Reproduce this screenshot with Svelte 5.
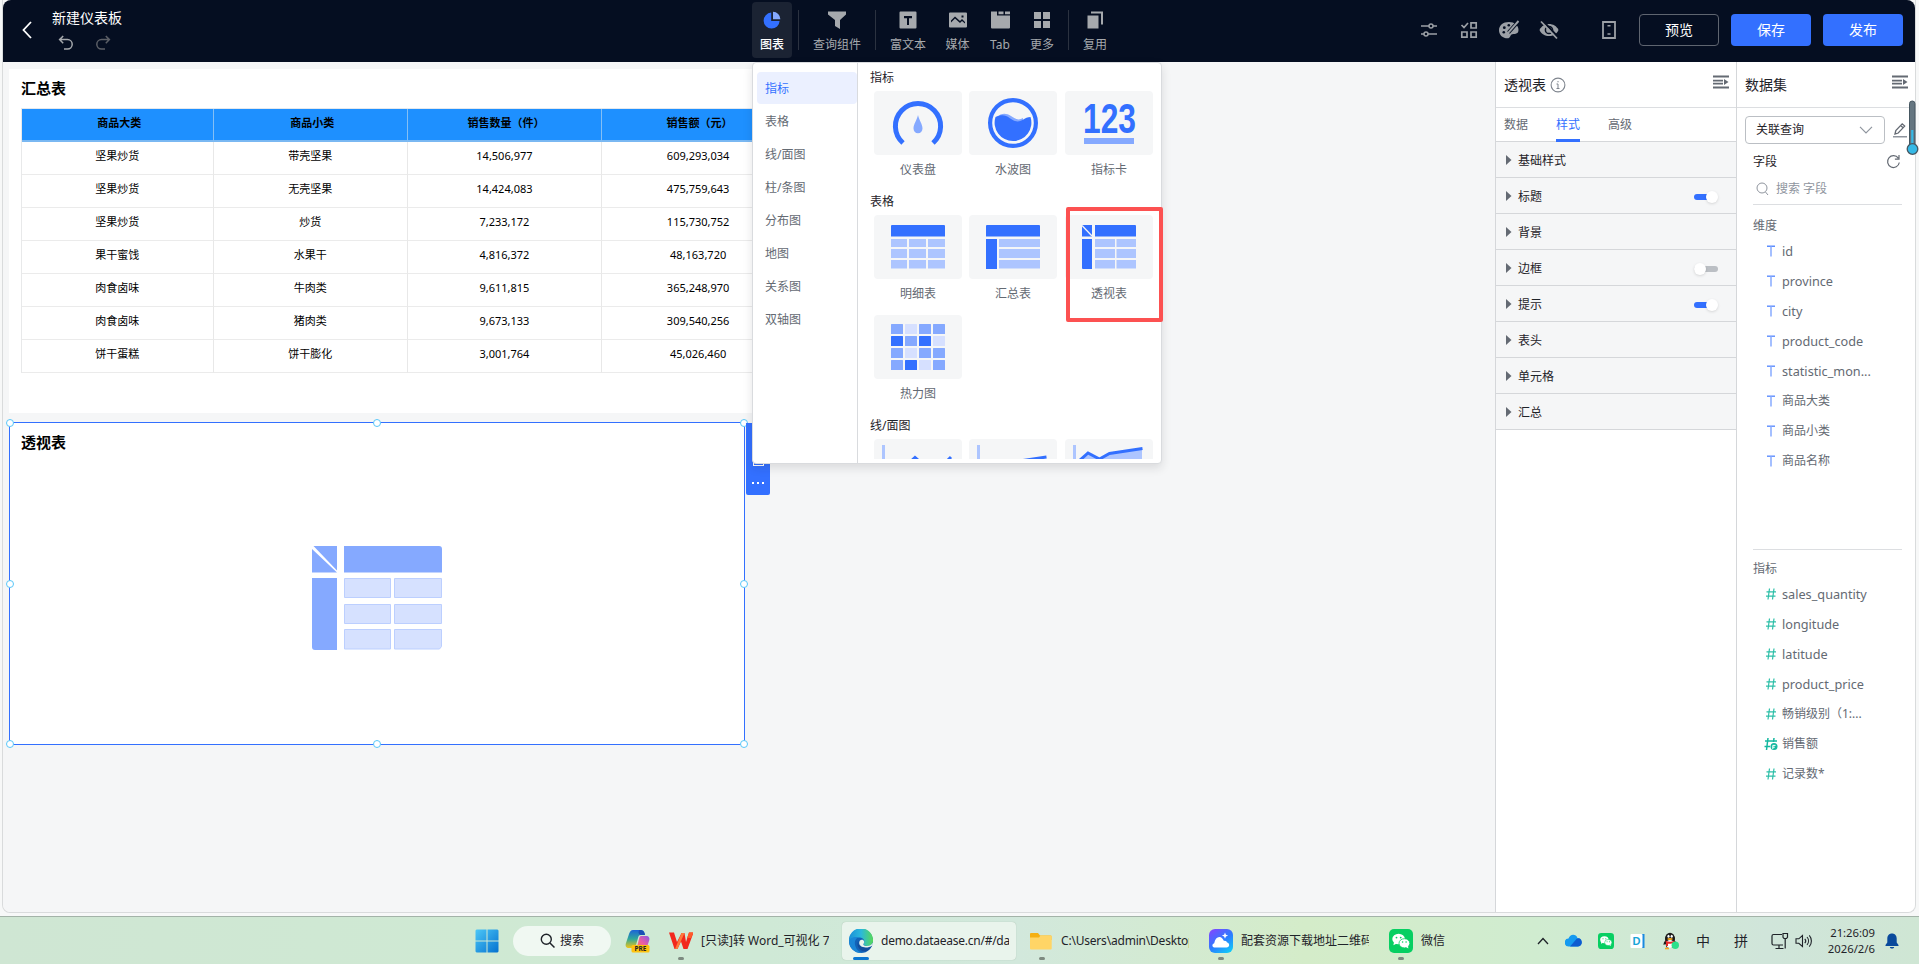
<script>
  const rows = [
    ['坚果炒货', '带壳坚果', '14,506,977', '609,293,034'],
    ['坚果炒货', '无壳坚果', '14,424,083', '475,759,643'],
    ['坚果炒货', '炒货', '7,233,172', '115,730,752'],
    ['果干蜜饯', '水果干', '4,816,372', '48,163,720'],
    ['肉食卤味', '牛肉类', '9,611,815', '365,248,970'],
    ['肉食卤味', '猪肉类', '9,673,133', '309,540,256'],
    ['饼干蛋糕', '饼干膨化', '3,001,764', '45,026,460']
  ];
  const heads = ['商品大类', '商品小类', '销售数量（件）', '销售额（元）'];
  const cats = ['指标', '表格', '线/面图', '柱/条图', '分布图', '地图', '关系图', '双轴图'];
  const sections = [
    ['基础样式', null], ['标题', true], ['背景', null], ['边框', false],
    ['提示', true], ['表头', null], ['单元格', null], ['汇总', null]
  ];
  const dims = ['id', 'province', 'city', 'product_code', 'statistic_mon...', '商品大类', '商品小类', '商品名称'];
  const metrics = ['sales_quantity', 'longitude', 'latitude', 'product_price', '畅销级别（1:...', '销售额', '记录数*'];
  const heat = [1, 0, 1, 1, 2, 1, 2, 0, 1, 0, 1, 1, 1, 2, 0, 1];
  const heatColors = ['#d6e0ff', '#85a9ff', '#3370ff'];
  const handles = [[0, 0], [50, 0], [100, 0], [0, 50], [100, 50], [0, 100], [50, 100], [100, 100]];
  const latin = (s) => /^[a-z]/.test(s);
</script>

{#snippet fold()}
  <svg class="fold" width="16" height="14" viewBox="0 0 16 14"><path d="M0 1.500h16M0 5.600h10M0 8.600h10M0 12.500h16" stroke="#646a73" stroke-width="1.900" /><path d="M11 4l4.500 3.100L11 10z" fill="#646a73" /></svg>
{/snippet}

{#snippet wechat(size)}
  <svg width={size} height={size} viewBox="0 0 24 24">
    <rect width="24" height="24" rx="5" fill="#07cf62" />
    <ellipse cx="9.600" cy="10" rx="6.300" ry="5.300" fill="#fff" /><path d="M5 13l-.6 3.300 3.400-1.700z" fill="#fff" />
    <ellipse cx="15.400" cy="14.300" rx="5.400" ry="4.600" fill="#fff" stroke="#07cf62" stroke-width=".8" /><path d="M17 18l2.400 1.400-.5-2.600z" fill="#fff" />
    <g fill="#07cf62"><circle cx="7.500" cy="8.600" r=".9" /><circle cx="11.700" cy="8.600" r=".9" /><circle cx="13.600" cy="13" r=".8" /><circle cx="17.100" cy="13" r=".8" /></g>
  </svg>
{/snippet}

<div class="screen">
  <div class="window">
    <header>
      <div class="left">
        <svg class="back" width="10" height="18" viewBox="0 0 10 18"><path d="M9 1L1.500 9 9 17" fill="none" stroke="#fff" stroke-width="1.800" /></svg>
        <div class="titles">
          <div class="doc">新建仪表板</div>
          <div class="history">
            <svg width="16" height="16" viewBox="0 0 16 16" fill="none" stroke="#a6a9ad" stroke-width="1.500"><path d="M5.200 1L1.600 4.600l3.600 3.600M2 4.600h7.500a4.700 4.700 0 0 1 0 9.400H6" /></svg>
            <svg width="16" height="16" viewBox="0 0 16 16" fill="none" stroke="#5c5f66" stroke-width="1.500"><path d="M10.800 1l3.600 3.600-3.600 3.600M14 4.600H6.500a4.700 4.700 0 0 0 0 9.400H10" /></svg>
          </div>
        </div>
      </div>
      <nav>
        <div class="tool on" style:width="40px">
          <svg width="18" height="18" viewBox="0 0 18 18"><path d="M8.200 1.600A8 8 0 1 0 16.600 10H8.200z" fill="#3370ff" /><path d="M10 .8a7.600 7.600 0 0 1 7.400 7.400H10z" fill="#85a9ff" /></svg>
          <span>图表</span>
        </div>
        <i></i>
        <div class="tool" style:width="64px">
          <svg width="18" height="18" viewBox="0 0 18 18"><path d="M0 .5h18v3L12 9v9l-5-3V9L0 3.500z" fill="#a6a9ad" /></svg>
          <span>查询组件</span>
        </div>
        <i></i>
        <div class="tool" style:width="52px">
          <svg width="18" height="18" viewBox="0 0 18 18"><path fill-rule="evenodd" d="M1.500.5h15a1 1 0 0 1 1 1v15a1 1 0 0 1-1 1h-15a1 1 0 0 1-1-1v-15a1 1 0 0 1 1-1zM5 5v2.200h3V14h2V7.200h3V5z" fill="#a6a9ad" /></svg>
          <span>富文本</span>
        </div>
        <div class="tool" style:width="41px">
          <svg width="18" height="18" viewBox="0 0 18 18"><path fill-rule="evenodd" d="M1 1.500h16a1 1 0 0 1 1 1v13a1 1 0 0 1-1 1H1a1 1 0 0 1-1-1v-13a1 1 0 0 1 1-1zM2 11.500l4-4 5 4.500 2-2 3 2.500V11l-3-3-2 2-5-4.500-4 4zM12.500 4.500v2h2v-2z" fill="#a6a9ad" /></svg>
          <span>媒体</span>
        </div>
        <div class="tool" style:width="38px">
          <svg width="19" height="18" viewBox="0 0 19 18"><path d="M0 .5h6v4h13V16.500a1 1 0 0 1-1 1H1a1 1 0 0 1-1-1zM7.500.5h5v2.700h-5zM14 .5h5v2.700h-5z" fill="#a6a9ad" /></svg>
          <span>Tab</span>
        </div>
        <div class="tool" style:width="40px">
          <svg width="18" height="18" viewBox="0 0 18 18"><path d="M1 1h7v7H1zM10 1h7v7h-7zM1 10h7v7H1zM10 10h7v7h-7z" fill="#a6a9ad" /></svg>
          <span>更多</span>
        </div>
        <i></i>
        <div class="tool" style:width="40px">
          <svg width="18" height="18" viewBox="0 0 18 18"><path d="M1.500 4.500h11v13h-11z" fill="#a6a9ad" /><path d="M5 1.500h11v12" fill="none" stroke="#a6a9ad" stroke-width="2" /></svg>
          <span>复用</span>
        </div>
      </nav>
      <div class="right">
        <svg width="24" height="24" viewBox="0 0 24 24" fill="none" stroke="#9ca0a6" stroke-width="1.500"><path d="M4 8h8M16 8h4M4 16h3M11 16h9" /><circle cx="14" cy="8" r="2" /><circle cx="9" cy="16" r="2" /></svg>
        <svg width="24" height="24" viewBox="0 0 24 24" fill="none" stroke="#9ca0a6" stroke-width="1.700"><path d="M4.500 7l2.500 2.500 4-4.500M14 4.800h5.200V10H14zM4.800 14H10v5.200H4.800zM14 14h5.200v5.200H14z" /></svg>
        <svg width="24" height="24" viewBox="0 0 24 24"><path d="M12 4C6 4 2 7.500 2 12.200 2 17.200 6 20.300 10.500 20.300c3 0 2.500-3 4-3.800 2-1 7 .5 7-4.500C21.500 7.500 17.500 4 12 4z" fill="#9ca0a6" /><g fill="#050e21"><circle cx="7.300" cy="9.700" r="1.400" /><circle cx="11.800" cy="7.300" r="1.300" /><circle cx="6.800" cy="14.300" r="1.300" /></g><path d="M11.500 14.500L21.500 3.300" stroke="#050e21" stroke-width="3.600" /><path d="M10.700 15.300L21.500 3" stroke="#9ca0a6" stroke-width="1.900" /></svg>
        <svg width="24" height="24" viewBox="0 0 24 24"><path d="M2.500 12C6 4 18 4 21.500 12 18 20 6 20 2.500 12z" fill="#9ca0a6" /><circle cx="12" cy="12" r="3.600" fill="none" stroke="#050e21" stroke-width="1.500" /><path d="M5.500 2.500l16 17" stroke="#050e21" stroke-width="2" /><path d="M4 3.500l16 17" stroke="#9ca0a6" stroke-width="1.800" /></svg>
        <svg class="phone" width="24" height="24" viewBox="0 0 24 24"><path d="M6 4h12v16H6z" fill="none" stroke="#9ca0a6" stroke-width="1.800" /><path d="M10.500 7.700h3M10.500 16h3" stroke="#9ca0a6" stroke-width="1.600" /></svg>
        <button class="ghost">预览</button>
        <button>保存</button>
        <button>发布</button>
      </div>
    </header>

    <main>
      <section class="canvas">
        <div class="widget summary">
          <h3>汇总表</h3>
          <div class="table">
            {#each heads as h}<div class="th">{h}</div>{/each}
            {#each rows as r}{#each r as c}<div class="td">{c}</div>{/each}{/each}
          </div>
        </div>
        <div class="widget pivot">
          <h3>透视表</h3>
          <svg class="ph" width="130" height="104" viewBox="0 0 130 104">
            <path d="M0 3L25 26.500H3 0zM1.500 0H25v24.500zM32 0h95a3 3 0 0 1 3 3v23.500H32zM0 32h25v72H3a3 3 0 0 1-3-3z" fill="#85a9ff" />
            <g fill="#d6e1ff" stroke="#bccfff" stroke-width="1"><path d="M32.500 32.500h46v19h-46zM82.500 32.500h47v19h-47zM32.500 58.500h46v19h-46zM82.500 58.500h47v19h-47zM32.500 83.500h46v19.500h-46zM82.500 83.500h47v17l-2 2.500h-45z" /></g>
          </svg>
          {#each handles as [x, y]}<b class="handle" style:left="{x}%" style:top="{y}%"></b>{/each}
          <div class="bar"><span class="copy"></span><span class="dots"><i></i><i></i><i></i></span></div>
        </div>
      </section>

      <aside class="style">
        <div class="phead"><span>透视表</span>
          <svg class="info" width="16" height="16" viewBox="0 0 16 16"><circle cx="8" cy="8" r="6.900" fill="none" stroke="#7f858e" stroke-width="1.100" /><path d="M8 7v4.500M6.500 7H8M6.500 11.500h3M8 4v1.300" stroke="#7f858e" fill="none" /></svg>
          {@render fold()}
        </div>
        <div class="tabs"><span>数据</span><span class="on">样式</span><span>高级</span></div>
        {#each sections as [name, sw]}
          <div class="sec"><svg width="6" height="10" viewBox="0 0 6 10"><path d="M0 0l5.500 5L0 10z" fill="#646a73" /></svg><span>{name}</span>
            {#if sw !== null}<em class:on={sw}></em>{/if}
          </div>
        {/each}
      </aside>

      <aside class="data">
        <div class="phead"><span>数据集</span>{@render fold()}</div>
        <div class="source">
          <div class="select"><span>关联查询</span><svg width="14" height="8" viewBox="0 0 14 8"><path d="M1 .8l6 6 6-6" fill="none" stroke="#8f959e" stroke-width="1.200" /></svg></div>
          <svg width="16" height="16" viewBox="0 0 16 16"><path d="M3 12l.8-3.500L10.200 1.800l2.500 2.300L6.200 11zM8.700 3.500l2.400 2.300" fill="none" stroke="#646a73" stroke-width="1.300" /><path d="M1 14.700h14" stroke="#8f959e" stroke-width="1.500" /></svg>
        </div>
        <div class="fhead"><span>字段</span><svg width="15" height="15" viewBox="0 0 15 15"><path d="M12.300 4.200A5.900 5.900 0 1 0 13.300 8.500M13 1v4.200H8.900" fill="none" stroke="#646a73" stroke-width="1.200" /></svg></div>
        <div class="search"><svg width="13" height="14" viewBox="0 0 13 14"><circle cx="6" cy="6" r="5" fill="none" stroke="#8f959e" /><path d="M9.500 10l2.500 3" stroke="#8f959e" /></svg><span>搜索 字段</span></div>
        <div class="group dim">
          <div class="glabel">维度</div>
          {#each dims as d}
            <div class="field"><svg width="14" height="14" viewBox="0 0 14 14"><path d="M3 2.200h8" stroke="#5c8dff" stroke-width="1.400" /><path d="M7 2.500v10" stroke="#94b4ff" stroke-width="1.700" /></svg><span class:latin={latin(d)}>{d}</span></div>
          {/each}
        </div>
        <div class="group">
          <div class="glabel">指标</div>
          {#each metrics as m}
            <div class="field"><svg width="14" height="14" viewBox="0 0 14 14">
              {#if m === '销售额'}
                <path d="M4 1L2.500 13M10 1L9.500 5M1 4h12M.5 9.500h5.500" fill="none" stroke="#14b8a0" stroke-width="1.500" /><circle cx="10" cy="9.500" r="3.500" fill="#14b8a0" /><path d="M8.800 12V8.400h2.700M8.800 10.200h2" stroke="#fff" stroke-width="1" fill="none" />
              {:else}
                <path d="M5.500 1.500L4 12.500M10 1.500L8.500 12.500M2.500 4.800h9.500M2 9.200h9.500" fill="none" stroke="#2dbfa8" stroke-width="1.200" />
              {/if}
            </svg><span class:latin={latin(m)}>{m}</span></div>
          {/each}
        </div>
      </aside>
    </main>

    <div class="popup">
      <div class="cats">{#each cats as c, i}<div class:on={i === 0}>{c}</div>{/each}</div>
      <div class="charts">
        <h4>指标</h4>
        <div class="grid">
          <figure>
            <svg viewBox="0 0 88 64"><path d="M29 52a22.600 22.600 0 1 1 30 0" fill="none" stroke="#3370ff" stroke-width="5" /><path d="M44 24c1 5 4.500 9 4.500 13.500a4.500 4.800 0 0 1-9 0C39.500 33 43 29 44 24z" fill="#85a9ff" /></svg>
            <figcaption>仪表盘</figcaption>
          </figure>
          <figure>
            <svg viewBox="0 0 88 64"><circle cx="44" cy="32" r="22.900" fill="none" stroke="#3370ff" stroke-width="4.200" /><path d="M28 26c4-4 9-4.500 14-1s8 4.500 12 2v5H28z" fill="#85a9ff" /><path d="M26.500 26c5-2.500 10-2.500 14 1 6 4.500 10 4 13 2 3-2 5-3 8-3a18.400 18.400 0 1 1-35 0z" fill="#3370ff" /></svg>
            <figcaption>水波图</figcaption>
          </figure>
          <figure>
            <svg viewBox="0 0 88 64"><text x="18" y="41.500" textLength="53" lengthAdjust="spacingAndGlyphs" class="num">123</text><path d="M19 47h50v6H19z" fill="#85a9ff" /></svg>
            <figcaption>指标卡</figcaption>
          </figure>
        </div>
        <h4>表格</h4>
        <div class="grid">
          <figure>
            <svg viewBox="0 0 88 64"><path d="M18 10h52a1 1 0 0 1 1 1v10.500H17V11a1 1 0 0 1 1-1z" fill="#3370ff" /><path d="M17 24h16v8H17zM35 24H52v8H35zM54 24h17v8H54zM17 34h16v9H17zM35 34H52v9H35zM54 34h17v9H54zM17 45h16v8.500H17zM35 45H52v8.500H35zM54 45h17v8.500H54z" fill="#adc5ff" /></svg>
            <figcaption>明细表</figcaption>
          </figure>
          <figure>
            <svg viewBox="0 0 88 64"><path d="M18 10h52a1 1 0 0 1 1 1v10.500H17V11a1 1 0 0 1 1-1zM17 24h11v30H17z" fill="#3370ff" /><path d="M30 24h41v8H30zM30 34h41v9H30zM30 45h41v8.500H30z" fill="#adc5ff" /></svg>
            <figcaption>汇总表</figcaption>
          </figure>
          <figure>
            <svg viewBox="0 0 88 64"><path d="M17 10h10v11.500H17zM30 10h40a1 1 0 0 1 1 1v10.500H30zM17 24h10v30H18a1 1 0 0 1-1-1z" fill="#3370ff" /><path d="M17 10.500l10 10.500" stroke="#f5f6f7" stroke-width="1.300" /><path d="M30 24h20v8H30zM51.500 24H71v8H51.500zM30 34h20v9H30zM51.500 34H71v9H51.500zM30 45h20v8.500H30zM51.500 45H71v8.500H51.500z" fill="#adc5ff" /></svg>
            <figcaption>透视表</figcaption>
          </figure>
          <figure>
            <svg viewBox="0 0 88 64">{#each heat as v, i}<rect x={17 + (i % 4) * 14} y={9 + Math.floor(i / 4) * 12} width="12" height="10" rx=".6" fill={heatColors[v]} />{/each}</svg>
            <figcaption>热力图</figcaption>
          </figure>
        </div>
        <h4>线/面图</h4>
        <div class="grid">
          <figure><svg viewBox="0 0 88 64"><path d="M8 6h3v48H8z" fill="#adc5ff" /><path d="M18 40L41 18.500 60 35 77 18" fill="none" stroke="#3370ff" stroke-width="3" /></svg></figure>
          <figure><svg viewBox="0 0 88 64"><path d="M8 6h3v48H8z" fill="#adc5ff" /><path d="M18 28L54 21.500l23.500-3.500" fill="none" stroke="#3370ff" stroke-width="3" /></svg></figure>
          <figure><svg viewBox="0 0 88 64"><path d="M8 6h3v48H8z" fill="#adc5ff" /><path d="M15 21l8-7 11.500 6 10-5.500L77 9.500V54H15z" fill="#adc5ff" /><path d="M14 22l9-8 11.500 6 10-5.500L77.500 9.500" fill="none" stroke="#3370ff" stroke-width="3" /></svg></figure>
        </div>
      </div>
      <div class="mark"></div>
    </div>
    <svg class="thermo" width="14" height="58" viewBox="0 0 14 58"><rect x="3.500" y="2" width="5.500" height="48" rx="2.700" fill="#647580" stroke="#465761" /><path d="M6.300 31v18" stroke="#35b9e6" stroke-width="2.200" /><circle cx="6.500" cy="50" r="5.300" fill="#35b9e6" stroke="#465761" stroke-width="1.300" /></svg>
  </div>

  <footer>
    <div class="apps">
      <svg width="24" height="24" viewBox="0 0 24 24"><defs><linearGradient id="win" x2="1" y2="1"><stop stop-color="#4cc7f7" /><stop offset="1" stop-color="#0571cf" /></linearGradient></defs><path d="M1.500.5h10v11h-11v-10zM12.500.5h10l1 1v10h-11zM.5 12.500h11v11h-10l-1-1zM12.500 12.500h11v10l-1 1h-10z" fill="url(#win)" /></svg>
      <div class="pill"><svg width="16" height="16" viewBox="0 0 16 16"><circle cx="6.300" cy="6.300" r="5" fill="none" stroke="#1f2329" stroke-width="1.400" /><path d="M10 10l4.500 4.500" stroke="#1f2329" stroke-width="1.500" /></svg><span>搜索</span></div>
      <svg class="copilot" width="26" height="26" viewBox="0 0 26 26">
        <defs><linearGradient id="cp1" x2="0" y2="1"><stop stop-color="#1b63d8" /><stop offset=".5" stop-color="#2fa89a" /><stop offset="1" stop-color="#f3c514" /></linearGradient><linearGradient id="cp2" x1="1" x2="0" y2="1"><stop stop-color="#8a55e6" /><stop offset=".6" stop-color="#ee5fa0" /><stop offset="1" stop-color="#f08a4b" /></linearGradient></defs>
        <path d="M8 2h8c2 0 3 1 3.500 3l.5 2h-4c-2 0-2.500 1-3 3l-2 7c-.5 2-1.500 3-3.500 3H4c-3 0-4-2-3-5l3-9C5 3.500 6 2 8 2z" fill="url(#cp1)" /><path d="M14 2c2.500 0 5 0 6 5h-4c-1.500 0-2-1-2.500-2.500z" fill="#1b4fb5" /><path d="M16 8h5c3 0 4 2 3 5l-2 6H12l2-8c.4-2 1-3 2-3z" fill="url(#cp2)" />
        <rect x="6.500" y="17" width="18" height="7.500" rx="1.500" fill="#fec20f" /><text x="15.500" y="23.200" text-anchor="middle" class="pre">PRE</text>
      </svg>
      <div class="app wps"><svg width="24" height="18" viewBox="0 0 24 18"><path d="M0 .5h5l3 9.500L12.500 1h3L17 10l3-9.500h4.500L18.500 17h-4L12 9.500 8.500 17H5.500z" fill="#f2281d" /><path d="M12.500 1h3L8.500 17H6z" fill="#ff7a3c" /><path d="M20 .5h4.500L22 6h-4z" fill="#ff5a2a" /></svg><span>[只读]转 Word_可视化 7</span><u></u></div>
      <div class="app edge"><svg width="24" height="24" viewBox="0 0 24 24">
        <defs><linearGradient id="ed" x2="1"><stop stop-color="#1b90d8" /><stop offset=".5" stop-color="#2bb8dc" /><stop offset="1" stop-color="#57d957" /></linearGradient></defs>
        <circle cx="12" cy="12" r="12" fill="#1263b8" /><path d="M0 12a12 12 0 0 1 24-1.500c.5 4-2.500 6.500-6 6.500-3 0-4-1.500-3-3 1-2 0-5-4-5.500C6 8 2 9 0 12z" fill="url(#ed)" /><path d="M0 12c2-4 6-4.500 9-3.500-3 1.500-4 5-2.500 9 1 3 3.500 5.500 6.500 6.500A12 12 0 0 1 0 12z" fill="#1a86d6" /><path d="M10 11c-1 2-1 4.500 1 6 3 2 8 2 12-.5-.7 1.500-1.700 3-3 4.300-4 3-9 1.500-11-3-1-2.500-.5-5 1-6.800z" fill="#134e9c" /><path d="M15 14c-1.500 2 0 3 3 3 2.700 0 5-1.500 5.800-3.600.2 1 0 2-.5 3-3.500 2.500-8.500 2.700-11.500.6-2-1.500-2-4-.8-5.500.8-1 3-1.500 4 .5.300.7.300 1.300 0 2z" fill="#e9f4ec" /></svg><span>demo.dataease.cn/#/da</span><u></u></div>
      <div class="app folder"><svg width="22" height="18" viewBox="0 0 22 18"><path d="M1 1h7l2 2.500h10.500a1 1 0 0 1 1 1V8H0V2a1 1 0 0 1 1-1z" fill="#f5b012" /><path d="M0 5.500h9L10.500 3.500H21a.7.7 0 0 1 .7.700V16.500a1 1 0 0 1-1 1H1a1 1 0 0 1-1-1z" fill="#ffd566" /></svg><span>C:\Users\admin\Desktop</span><u></u></div>
      <div class="app cloud"><svg width="24" height="24" viewBox="0 0 24 24"><defs><linearGradient id="bl" x1=".2" x2=".9" y2="1"><stop stop-color="#7a4bff" /><stop offset=".5" stop-color="#2b7cff" /><stop offset="1" stop-color="#0fd0f7" /></linearGradient></defs><rect width="24" height="24" rx="6" fill="url(#bl)" /><path d="M6 18.500c-3 0-3.500-3.500-.8-4.300C6 10 8 8 10.300 8c2.500 0 3.500 2 4.700 4 1-.8 2.700 0 3 1.500 3 .5 3 5-.5 5z" fill="#fff" /><path d="M16 3.500l.9 2.200 2.200.9-2.200.9-.9 2.200-.9-2.200-2.200-.9 2.200-.9z" fill="#fff" /></svg><span>配套资源下载地址二维码</span><u></u></div>
      <div class="app wx">{@render wechat(24)}<span>微信</span><u></u></div>
    </div>
    <div class="tray">
      <svg width="12" height="8" viewBox="0 0 12 8"><path d="M1 7l5-5.500L11 7" fill="none" stroke="#1f2329" stroke-width="1.300" /></svg>
      <svg width="17" height="13" viewBox="0 0 17 13"><path d="M4 12.500a4 4 0 0 1-.5-8C5-.5 11-.5 12.500 4c5 0 5.500 8 .5 8.500z" fill="#159af0" /><path d="M5 12.500L11.500 5c3-2.500 6 1 5.200 4.500-.5 2-2 3-4 3z" fill="#0d5bd0" /></svg>
      {@render wechat(16)}
      <svg width="16" height="16" viewBox="0 0 16 16"><path d="M11 1h3.500v14H11z" fill="#1a8ae0" /><rect x=".5" y="1" width="12" height="14" rx="1" fill="#fff" /><text x="6.500" y="12" text-anchor="middle" class="dd">D</text></svg>
      <svg width="18" height="18" viewBox="0 0 18 18"><ellipse cx="8" cy="7" rx="5" ry="6.300" fill="#1b1b1b" /><path d="M1.500 13c0-3 1.500-4 2.500-5h8c1 1 2.500 2 2.500 5l-2-1-1 3.500H4.500L3.500 12z" fill="#1b1b1b" /><ellipse cx="8" cy="12" rx="3.600" ry="4" fill="#fff" /><path d="M3.500 8.500c3 1.600 6 1.600 9 0v2c-3 1.500-5 1.500-6.500 1.200V14H4v-3z" fill="#e62a2a" /><ellipse cx="6.500" cy="4.300" rx="1.100" ry="1.500" fill="#fff" /><ellipse cx="9.700" cy="4.300" rx="1.100" ry="1.500" fill="#fff" /><ellipse cx="8" cy="7" rx="2.800" ry=".9" fill="#f7a91d" /><path d="M3 16.500h4" stroke="#f7a91d" stroke-width="1.600" /><circle cx="13.300" cy="13.300" r="3.700" fill="#2de08b" /></svg>
      <span class="ime">中</span><span class="ime pin">拼</span>
      <svg class="net" width="18" height="18" viewBox="0 0 18 18" fill="none" stroke="#1f2329" stroke-width="1.200"><path d="M11 2.500H2.500a1.500 1.500 0 0 0-1.500 1.500v7.500a1.500 1.500 0 0 0 1.500 1.500H12M8 13v3.500M4.500 16.500h8M12 1.500h4.500v3.800l-1 1.200h-2.500l-1-1.200zM14.200 6.500V16.500" /></svg>
      <svg class="vol" width="18" height="16" viewBox="0 0 18 16" fill="none" stroke="#1f2329" stroke-width="1.100"><path d="M1 5.800h2.800L7.500 2.500v11L3.800 10.300H1zM9.800 5.800c1.200 1.300 1.200 3 0 4.400M12 4c2 2.300 2 5.700 0 8M14.300 2.300c2.800 3.300 2.800 8.100 0 11.400" /></svg>
      <div class="clock"><span>21:26:09</span><span>2026/2/6</span></div>
      <svg width="14" height="16" viewBox="0 0 14 16"><path d="M7 .5c3 0 4.700 2.200 4.700 5v4L13.500 12v1H.5v-1l1.800-2.500v-4C2.300 2.700 4 .5 7 .5zM4.800 14h4.400c-.5 2-3.900 2-4.400 0z" fill="#0a4a9c" /></svg>
    </div>
  </footer>
</div>

<style>
  :global(body) { margin: 0; background: #f7f8f8; }
  .screen, .screen * { box-sizing: border-box; }
  .screen { width: 1919px; height: 964px; overflow: hidden; display: flex; flex-direction: column; font: 12px/16px "Noto Sans", "Noto Sans CJK SC", sans-serif; color: #1f2329; background: #f7f8f8; }
  svg { display: block; flex: none; }
  .window { position: relative; margin: 0 3px 0 2px; width: 1914px; height: 913px; display: flex; flex-direction: column; flex: none; border: 1px solid #d9dbdc; border-top: 0; border-radius: 0 0 8px 8px; }
  header { height: 62px; flex: none; background: #050e21; border-radius: 8px 8px 0 0; display: flex; color: #a6a9ad; }
  .left { width: 749px; display: flex; padding: 9px 0 0 19px; gap: 20px; }
  .back { margin-top: 12px; }
  .doc { color: #fff; font-size: 14px; line-height: 18px; }
  .history { display: flex; gap: 21px; padding: 8px 0 0 6px; }
  nav { display: flex; gap: 3px; padding-top: 2px; }
  nav > i { width: 1px; height: 40px; margin: 8px 3px 0; background: #2b3240; }
  .tool { height: 56px; border-radius: 4px; display: flex; flex-direction: column; align-items: center; padding-top: 9px; gap: 8px; white-space: nowrap; }
  .tool.on { background: #1b2333; color: #fff; font-weight: 500; }
  .right { flex: 1; display: flex; justify-content: flex-end; gap: 16px; padding: 14px 12px 0 0; }
  .right svg { margin-top: 4px; }
  .right .phone { margin: 4px 2px 0 20px; }
  button { width: 80px; height: 32px; border: 0; border-radius: 4px; background: #3370ff; color: #fff; font: 14px/20px "Noto Sans", "Noto Sans CJK SC", sans-serif; padding: 0 0 1px; }
  button + button { margin-left: -4px; }
  .ghost { background: transparent; border: 1px solid #5f6570; }
  main { flex: 1; min-height: 0; display: flex; border-radius: 0 0 8px 8px; overflow: hidden; }
  .canvas { width: 1492px; background: #f5f6f7; padding: 7px 0 0 6px; overflow: hidden; flex: none; }
  .widget { background: #fff; }
  h3 { margin: 0; font-size: 15px; line-height: 20px; font-weight: 700; color: #000; font-family: "Noto Sans CJK SC", sans-serif; }
  .summary { width: 796px; height: 344px; padding: 9px 0 0 12px; }
  .table { margin-top: 10px; width: 776px; display: grid; grid-template-columns: 192.400px 193.700px 193.700px 193.700px; grid-template-rows: 33px; grid-auto-rows: 33px; border-left: 1px solid #e8e9ea; border-top: 1px solid #e3e8ee; }
  .th, .td { display: flex; align-items: center; justify-content: center; font-size: 11px; color: #000; border-right: 1px solid #e8e8e8; border-bottom: 1px solid #ebebeb; padding-bottom: 4px; }
  .td:nth-child(4n + 1), .td:nth-child(4n + 2) { padding-right: 1px; }
  .th { background: #1e90ff; font-weight: 700; border-right-color: #84bff5; border-bottom: 2px solid #7ab8f2; padding-left: 3px; padding-bottom: 3px; }
  .pivot { position: relative; width: 736px; height: 323px; margin-top: 9px; border: 1px solid #3370ff; padding: 9px 0 0 11px; }
  .ph { margin: 94px 0 0 291px; }
  .handle { position: absolute; width: 8px; height: 8px; margin: -4px 0 0 -4px; border: 1px solid #59c7f9; border-radius: 50%; background: #fff; }
  .bar { position: absolute; left: 736px; top: 0; width: 24px; height: 72px; background: #3370ff; border-radius: 0 2px 2px 2px; display: flex; flex-direction: column; align-items: center; }
  .copy { width: 11px; height: 12px; border: 1.500px solid #fff; margin-top: 31px; }
  .dots { display: flex; gap: 3px; margin-top: 16px; }
  .dots i { width: 2px; height: 2px; background: #fff; }
  aside { background: #fff; border-left: 1px solid #d5d7da; }
  .style { width: 241px; flex: none; }
  .data { flex: 1; }
  .phead { height: 46px; border-bottom: 1px solid #dcdee1; padding: 0 7px 0 8px; display: flex; align-items: center; font-size: 14px; }
  .info { margin-left: 4px; }
  .fold { margin: -5px 0 0 auto; }
  .data .phead { padding-right: 7px; }
  .tabs { height: 34px; border-bottom: 1px solid #d5d7da; padding-left: 8px; display: flex; gap: 28px; color: #646a73; line-height: 34px; }
  .tabs .on { color: #3370ff; height: 34px; border-bottom: 3px solid #3370ff; }
  .sec { height: 36px; background: #f5f6f7; border-bottom: 1px solid #d5d7da; display: flex; align-items: center; padding: 2px 18px 0 10px; }
  .sec svg { margin-top: -2px; }
  .sec span { margin-left: 6px; }
  .sec em { position: relative; margin: 0 0 0 auto; width: 24px; height: 6px; border-radius: 3px; background: #bbbfc4; }
  .sec em::after { content: ''; position: absolute; top: -3px; left: 0; width: 12px; height: 12px; border-radius: 50%; background: #fff; box-shadow: 0 1px 3px #0002; }
  .sec em.on { background: linear-gradient(90deg, #3370ff 18px, transparent 18px); }
  .sec em.on::after { left: 12px; }
  .source { display: flex; padding: 8px 0 0 8px; gap: 7px; align-items: center; }
  .select { width: 140px; height: 28px; border: 1px solid #bbbfc4; border-radius: 4px; display: flex; align-items: center; justify-content: space-between; padding: 0 11px 0 10px; }
  .fhead { display: flex; justify-content: space-between; align-items: center; margin-top: 10px; padding: 0 14px 0 16px; }
  .fhead svg { margin-top: -2px; }
  .search { display: flex; align-items: center; gap: 7px; margin: 9px 13px 0 16px; padding: 0 0 5px 3px; height: 26px; border-bottom: 1px solid #dcdee1; color: #8f959e; }
  .group { margin: 0 13px 0 16px; padding-top: 11px; color: #646a73; }
  .dim { height: 345px; padding-top: 13px; border-bottom: 1px solid #dcdee1; }
  .glabel { height: 16px; margin-bottom: 2px; }
  .field { height: 30px; display: flex; align-items: center; gap: 4px; margin-left: 11px; white-space: nowrap; }
  .latin { font-size: 12.700px; font-family: "Noto Sans", sans-serif; }
  .popup { position: absolute; left: 749px; top: 62px; width: 410px; height: 402px; background: #fff; border: 1px solid #d9dbde; border-radius: 4px; box-shadow: 0 4px 10px #1f232920; display: flex; }
  .cats { width: 105px; border-right: 1px solid #d9dbde; padding: 9px 0 0 4px; color: #646a73; display: flex; flex-direction: column; gap: 1px; }
  .cats div { height: 32px; line-height: 33px; padding-left: 8px; border-radius: 4px; }
  .cats .on { background: #ebf0ff; color: #3370ff; }
  .charts { padding: 7px 0 0 12px; height: 396px; overflow: hidden; }
  h4 { margin: 0; font-size: 12px; line-height: 16px; font-weight: 400; }
  .grid { display: grid; grid-template-columns: 95px 96px 88px; row-gap: 13px; margin: 5px 0 16px 4px; }
  figure { margin: 0; width: 88px; height: 87px; text-align: center; color: #646a73; }
  figure svg { width: 88px; height: 64px; background: #f5f6f7; border-radius: 4px; margin-bottom: 7px; }
  .num { font: 700 43px "Liberation Sans", sans-serif; fill: #3370ff; }
  .mark { position: absolute; left: 313px; top: 144px; width: 97px; height: 115px; border: 4px solid #fc5151; border-radius: 2px; }
  .thermo { position: absolute; left: 1903px; top: 99px; }
  footer { margin-top: 3px; height: 48px; flex: none; border-top: 1px solid #a3b3a8; display: flex; align-items: center; justify-content: space-between; background: linear-gradient(90deg, #cfe6d3 0%, #cfe9d3 25%, #cfe9d6 40%, #d2e8dc 53%, #d4ecc9 68%, #d0ecd0 80%, #d0e5da 92%, #cfe6d4 100%); padding: 0 20px 0 475px; }
  .apps { display: flex; align-items: center; height: 47px; }
  .pill { width: 98px; height: 30px; border-radius: 15px; background: #f0f8f2; margin-left: 14px; display: flex; align-items: center; justify-content: center; gap: 4px; }
  .copilot { margin: 0 18px 0 14px; }
  .pre { font: 700 6.500px "Noto Sans", sans-serif; fill: #222; }
  .app { position: relative; height: 38px; display: flex; align-items: center; gap: 8px; white-space: nowrap; }
  .app span { overflow: hidden; width: 128px; }
  .app u { position: absolute; left: 9px; bottom: 0; width: 6px; height: 3px; border-radius: 2px; background: #7d8a80; }
  .edge { width: 174px; margin-left: 13px; padding-left: 7px; background: #e9f4ec; border-radius: 4px; box-shadow: 0 0 1px #9bb0a1; }
  .edge span { letter-spacing: -.25px; }
  .folder span { letter-spacing: -.2px; }
  .edge u { left: 11px; width: 16px; background: #0b76d1; }
  .folder { margin-left: 14px; gap: 9px; }
  .cloud { margin-left: 20px; }
  .wx { margin-left: 20px; }
  .wx span { width: 24px; }
  .tray { display: flex; align-items: center; height: 47px; gap: 16px; }
  .dd { font: 700 11px "Liberation Sans", sans-serif; fill: #18a5d8; }
  .ime { font-size: 14px; width: 14px; }
  .pin { margin-left: 8px; }
  .net { margin-left: 7px; }
  .vol { margin-left: -10px; }
  .clock { width: 54px; margin: 0 -7px 0 -7px; padding-right: 1px; display: flex; flex-direction: column; align-items: flex-end; font-size: 11.300px; }
</style>
